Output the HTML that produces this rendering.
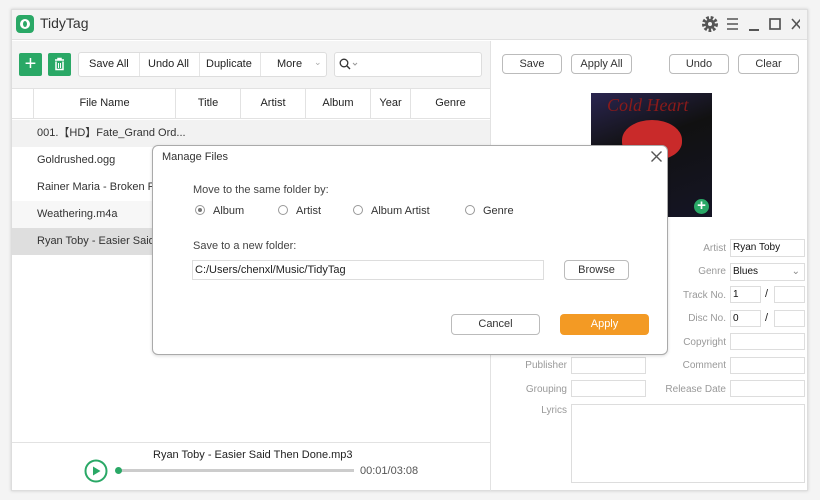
<!DOCTYPE html>
<html><head><style>
*{box-sizing:border-box;margin:0;padding:0}
body{width:820px;height:500px;background:#f4f4f4;font-family:"Liberation Sans",sans-serif;font-size:11px;color:#222;position:relative;overflow:hidden}
.a{position:absolute}
.btn{position:absolute;border:1px solid #bbb;border-radius:4px;background:#fff;text-align:center;font-size:11px;color:#333}
.lbl{position:absolute;color:#999;font-size:10px;text-align:right}
.in{position:absolute;border:1px solid #ddd;background:#fff;font-size:10px;padding-left:2px;color:#111}
.th{position:absolute;top:89px;height:29px;line-height:29px;text-align:center;border-right:1px solid #e2e2e2;font-size:11px}
.row{position:absolute;left:12px;width:478px;height:27px;line-height:27px;padding-left:25px;font-size:11px;color:#333}
.radio{display:inline-block;width:10px;height:10px;border:1px solid #999;border-radius:50%;vertical-align:-1px;margin-right:8px;position:relative}
</style></head><body>
<div class="a" style="left:11px;top:9px;width:797px;height:482px;background:#fff;border:1px solid #ddd;box-shadow:0 0 3px #ccc"></div>
<!-- title bar -->
<div class="a" style="left:12px;top:10px;width:795px;height:30px;background:#f3f3f3;border-bottom:1px solid #e0e0e0"></div>
<div class="a" style="left:16px;top:15px;width:18px;height:18px;background:#2aa866;border-radius:4px"><div class="a" style="left:4px;top:4px;width:10px;height:10px;border-radius:50%;background:#fff"></div><div class="a" style="left:7px;top:6px;width:4px;height:6px;border-radius:50%;background:#2aa866"></div></div>
<div class="a" style="left:40px;top:15px;font-size:14px;color:#333">TidyTag</div>
<svg class="a" style="left:700px;top:15px" width="100" height="18" viewBox="0 0 100 18">
<circle cx="10" cy="9" r="6" fill="none" stroke="#555" stroke-width="4" stroke-dasharray="2.5 1.6"/><circle cx="10" cy="9" r="5" fill="#555"/><circle cx="10" cy="9" r="2" fill="#f3f3f3"/>
<path d="M27 4h11M27 9h11M27 14h11" stroke="#555" stroke-width="1.5"/>
<path d="M49 15h10" stroke="#555" stroke-width="2"/>
<rect x="70" y="4" width="10" height="10" fill="none" stroke="#555" stroke-width="1.7"/>
<path d="M92 4l9 10M101 4l-9 10" stroke="#555" stroke-width="1.6"/>
</svg>
<!-- left panel toolbar -->
<div class="a" style="left:12px;top:41px;width:478px;height:47px;background:#f4f4f4"></div>
<div class="a" style="left:19px;top:53px;width:23px;height:23px;background:#2aa866;border-radius:2px;color:#fff;font-size:20px;line-height:22px;text-align:center">+</div>
<svg class="a" style="left:48px;top:53px" width="23" height="23"><rect width="23" height="23" rx="2" fill="#2aa866"/><path d="M7 7h9M10 7V5.5h3V7M8 8.5v8h7v-8" fill="none" stroke="#fff" stroke-width="1.5"/><path d="M10.5 10v5M12.5 10v5" stroke="#fff"/></svg>
<div class="a" style="left:78px;top:52px;width:249px;height:25px;background:#fff;border:1px solid #ddd;border-radius:3px"></div>
<div class="a" style="left:89px;top:58px;font-size:11px">Save All</div>
<div class="a" style="left:139px;top:53px;width:1px;height:23px;background:#e5e5e5"></div>
<div class="a" style="left:148px;top:58px">Undo All</div>
<div class="a" style="left:199px;top:53px;width:1px;height:23px;background:#e5e5e5"></div>
<div class="a" style="left:206px;top:58px">Duplicate</div>
<div class="a" style="left:260px;top:53px;width:1px;height:23px;background:#e5e5e5"></div>
<div class="a" style="left:277px;top:58px">More</div>
<div class="a" style="left:314px;top:57px;color:#aaa;font-size:9px">&#8964;</div>
<div class="a" style="left:334px;top:52px;width:148px;height:25px;background:#fff;border:1px solid #ddd;border-radius:3px"></div>
<svg class="a" style="left:339px;top:57px" width="22" height="14"><circle cx="5" cy="6" r="3.8" fill="none" stroke="#333" stroke-width="1.3"/><path d="M8 9l3 3" stroke="#333" stroke-width="1.4"/><path d="M14 6l2 2 2-2" fill="none" stroke="#999"/></svg>
<!-- table header -->
<div class="a" style="left:12px;top:88px;width:478px;height:31px;background:#fff;border-top:1px solid #e2e2e2;border-bottom:1px solid #e2e2e2"></div>
<div class="th" style="left:12px;width:22px"></div>
<div class="th" style="left:34px;width:142px">File Name</div>
<div class="th" style="left:176px;width:65px">Title</div>
<div class="th" style="left:241px;width:65px">Artist</div>
<div class="th" style="left:306px;width:65px">Album</div>
<div class="th" style="left:371px;width:40px">Year</div>
<div class="th" style="left:411px;width:79px;border:0">Genre</div>
<div class="row" style="top:120px;background:#f2f2f2">001.【HD】Fate_Grand Ord...</div>
<div class="row" style="top:147px;background:#fff">Goldrushed.ogg</div>
<div class="row" style="top:174px;background:#fff">Rainer Maria - Broken R</div>
<div class="row" style="top:201px;background:#f7f7f7">Weathering.m4a</div>
<div class="row" style="top:228px;background:#dedede">Ryan Toby - Easier Said</div>
<!-- player -->
<div class="a" style="left:12px;top:442px;width:478px;height:1px;background:#e2e2e2"></div>
<div class="a" style="left:153px;top:449px;font-size:11px">Ryan Toby - Easier Said Then Done.mp3</div>
<svg class="a" style="left:84px;top:459px" width="26" height="26"><circle cx="12" cy="12" r="10.5" fill="none" stroke="#2aa866" stroke-width="2"/><path d="M9 7.5v9l7.5-4.5z" fill="#2aa866"/></svg>
<div class="a" style="left:118px;top:469px;width:236px;height:3px;background:#ccc"></div>
<div class="a" style="left:115px;top:467px;width:7px;height:7px;border-radius:50%;background:#2aa866"></div>
<div class="a" style="left:360px;top:465px;color:#555">00:01/03:08</div>
<!-- divider -->
<div class="a" style="left:490px;top:41px;width:1px;height:450px;background:#e2e2e2"></div>
<!-- right -->
<div class="btn" style="left:502px;top:54px;width:60px;height:20px;line-height:18px">Save</div>
<div class="btn" style="left:571px;top:54px;width:61px;height:20px;line-height:18px">Apply All</div>
<div class="btn" style="left:669px;top:54px;width:60px;height:20px;line-height:18px">Undo</div>
<div class="btn" style="left:738px;top:54px;width:61px;height:20px;line-height:18px">Clear</div>
<div class="a" style="left:591px;top:93px;width:121px;height:124px;background:linear-gradient(160deg,#2a2550,#111 40%,#151525)"></div>
<div class="a" style="left:607px;top:95px;font-family:'Liberation Serif',serif;font-style:italic;font-size:18px;color:#8a1a1a">Cold Heart</div>
<div class="a" style="left:622px;top:120px;width:60px;height:40px;background:#c92a2a;border-radius:50% 50% 45% 45%"></div>
<div class="a" style="left:694px;top:199px;width:15px;height:15px;border-radius:50%;background:#2aa866;color:#fff;font-size:15px;line-height:14px;text-align:center;font-weight:bold">+</div>
<div class="lbl" style="left:640px;top:243px;width:86px">Artist</div><div class="in" style="left:730px;top:239px;width:75px;height:18px;line-height:16px">Ryan Toby</div>
<div class="lbl" style="left:640px;top:266px;width:86px">Genre</div><div class="in" style="left:730px;top:263px;width:75px;height:18px;line-height:16px">Blues<span style="position:absolute;right:4px;color:#888">&#8964;</span></div>
<div class="lbl" style="left:640px;top:290px;width:86px">Track No.</div><div class="in" style="left:730px;top:286px;width:31px;height:17px;line-height:15px">1</div><div class="a" style="left:765px;top:288px">/</div><div class="in" style="left:774px;top:286px;width:31px;height:17px"></div>
<div class="lbl" style="left:640px;top:313px;width:86px">Disc No.</div><div class="in" style="left:730px;top:310px;width:31px;height:17px;line-height:15px">0</div><div class="a" style="left:765px;top:312px">/</div><div class="in" style="left:774px;top:310px;width:31px;height:17px"></div>
<div class="lbl" style="left:640px;top:337px;width:86px">Copyright</div><div class="in" style="left:730px;top:333px;width:75px;height:17px"></div>
<div class="lbl" style="left:480px;top:360px;width:87px">Publisher</div><div class="in" style="left:571px;top:357px;width:75px;height:17px"></div>
<div class="lbl" style="left:640px;top:360px;width:86px">Comment</div><div class="in" style="left:730px;top:357px;width:75px;height:17px"></div>
<div class="lbl" style="left:480px;top:384px;width:87px">Grouping</div><div class="in" style="left:571px;top:380px;width:75px;height:17px"></div>
<div class="lbl" style="left:640px;top:384px;width:86px">Release Date</div><div class="in" style="left:730px;top:380px;width:75px;height:17px"></div>
<div class="lbl" style="left:480px;top:405px;width:87px">Lyrics</div><div class="in" style="left:571px;top:404px;width:234px;height:79px"></div>
<!-- dialog -->
<div class="a" style="left:152px;top:145px;width:516px;height:210px;background:#fff;border:1px solid #aaa;border-radius:6px;box-shadow:0 1px 3px rgba(0,0,0,.15)"></div>
<div class="a" style="left:162px;top:151px;font-size:11px;color:#333">Manage Files</div>
<svg class="a" style="left:650px;top:150px" width="13" height="13"><path d="M1.5 1.5l10 10M11.5 1.5l-10 10" stroke="#555" stroke-width="1.4"/></svg>
<div class="a" style="left:193px;top:184px;color:#444">Move to the same folder by:</div>
<div class="a" style="left:195px;top:205px;color:#333"><span class="radio"><span style="position:absolute;left:2px;top:2px;width:4px;height:4px;border-radius:50%;background:#777"></span></span>Album</div>
<div class="a" style="left:278px;top:205px;color:#333"><span class="radio"></span>Artist</div>
<div class="a" style="left:353px;top:205px;color:#333"><span class="radio"></span>Album Artist</div>
<div class="a" style="left:465px;top:205px;color:#333"><span class="radio"></span>Genre</div>
<div class="a" style="left:193px;top:240px;color:#444">Save to a new folder:</div>
<div class="a" style="left:192px;top:260px;width:352px;height:20px;border:1px solid #ddd;line-height:18px;padding-left:2px;color:#222">C:/Users/chenxl/Music/TidyTag</div>
<div class="btn" style="left:564px;top:260px;width:65px;height:20px;line-height:18px">Browse</div>
<div class="btn" style="left:451px;top:314px;width:89px;height:21px;line-height:19px">Cancel</div>
<div class="a" style="left:560px;top:314px;width:89px;height:21px;line-height:21px;background:#f39a24;border-radius:4px;color:#fff;text-align:center">Apply</div>
</body></html>
